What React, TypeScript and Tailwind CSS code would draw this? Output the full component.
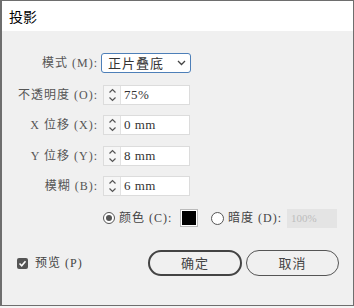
import React from "react";

const font = { fontFamily: '"Noto Sans CJK SC", "Liberation Sans", sans-serif' };
const mixed = { fontFamily: '"Liberation Serif", "Noto Sans CJK SC", serif' };

function Stepper({ value }: { value: string }) {
  return (
    <div className="flex h-[20px] w-[87px] border border-[#dcdcdc] bg-white">
      <div className="flex w-[17px] flex-col items-center justify-center border-r border-[#e2e2e2] bg-[#f6f6f6]">
        <svg width="9" height="16" viewBox="0 0 9 16" fill="none" stroke="#555" strokeWidth="1.2">
          <path d="M1.5 5.5 L4.5 2.5 L7.5 5.5" />
          <path d="M1.5 10.5 L4.5 13.5 L7.5 10.5" />
        </svg>
      </div>
      <div className="flex items-center pl-[3px] text-[13px] tracking-[0.5px] text-[#333]" style={mixed}>
        {value}
      </div>
    </div>
  );
}

function Row({ label, children, className }: { label: string; children: React.ReactNode; className?: string }) {
  return (
    <div className={"flex h-[20px] items-center " + (className ?? "")}>
      <div className="w-[96px] whitespace-nowrap text-right text-[12px] tracking-[1px] text-[#555]" style={mixed}>
        {label}
      </div>
      <div className="ml-[5px]">{children}</div>
    </div>
  );
}

export default function App() {
  return (
    <div className="h-[308px] w-[354px] bg-[#f4f4f4]" style={font}>
      <div className="flex h-[306px] w-[354px] flex-col border-t border-r border-b border-l-2 border-[#6e6e6e] bg-[#f0f0f0]">
        <div className="flex h-[30px] items-center bg-white pl-[7px] text-[14px] text-black">投影</div>

        <div className="flex flex-col">
          <Row label="模式 (M):" className="mt-[22px]">
            <div className="-ml-[2px] flex h-[20px] w-[90px] items-center justify-between rounded-[3px] border border-[#4d7fb8] bg-white pl-[6px] pr-[4px] text-[13px] tracking-[1px] text-[#333]">
              <span>正片叠底</span>
              <svg width="9" height="6" viewBox="0 0 9 6" fill="none" stroke="#444" strokeWidth="1.3">
                <path d="M1 1 L4.5 4.5 L8 1" />
              </svg>
            </div>
          </Row>
          <Row label="不透明度 (O):" className="mt-[12px]">
            <Stepper value="75%" />
          </Row>
          <Row label="X 位移 (X):" className="mt-[10px]">
            <Stepper value="0 mm" />
          </Row>
          <Row label="Y 位移 (Y):" className="mt-[11px]">
            <Stepper value="8 mm" />
          </Row>
          <Row label="模糊 (B):" className="mt-[10px]">
            <Stepper value="6 mm" />
          </Row>

          <div className="mt-[12px] flex h-[20px] items-center pl-[101px] text-[12px] tracking-[1px] text-[#444]" style={mixed}>
            <div className="flex h-[12px] w-[12px] items-center justify-center rounded-full border border-[#555] bg-white">
              <div className="h-[6px] w-[6px] rounded-full bg-[#555]" />
            </div>
            <span className="ml-[4px] w-[62px] whitespace-nowrap">颜色 (C):</span>
            <div className="h-[16px] w-[16px] border border-white bg-black outline outline-1 outline-[#bbb]" />
            <div className="ml-[14px] h-[13px] w-[13px] rounded-full border border-[#555] bg-white" />
            <span className="ml-[4px] w-[59px] whitespace-nowrap">暗度 (D):</span>
            <div className="flex h-[19px] w-[50px] items-center bg-[#e4e4e4] pl-[4px] text-[11px] tracking-normal text-[#bdbdbd]">100%</div>
          </div>

          <div className="mt-[22px] flex h-[26px] items-center">
            <div className="ml-[15px] flex w-[131px] items-center">
              <div className="flex h-[11px] w-[11px] items-center justify-center rounded-[2px] bg-[#555]">
                <svg width="9" height="9" viewBox="0 0 9 9" fill="none" stroke="white" strokeWidth="1.6">
                  <path d="M1.5 4.5 L3.7 6.7 L7.5 2.2" />
                </svg>
              </div>
              <span className="ml-[7px] text-[12px] tracking-[1px] text-[#444]" style={mixed}>预览 (P)</span>
            </div>
            <button className="flex h-[26px] w-[94px] items-center justify-center rounded-full border-2 border-[#444] text-[13px] tracking-[1px] text-[#444]">
              确定
            </button>
            <button className="ml-[4px] flex h-[26px] w-[93px] items-center justify-center rounded-full border border-[#555] text-[13px] tracking-[1px] text-[#444]">
              取消
            </button>
          </div>
        </div>
      </div>
    </div>
  );
}
